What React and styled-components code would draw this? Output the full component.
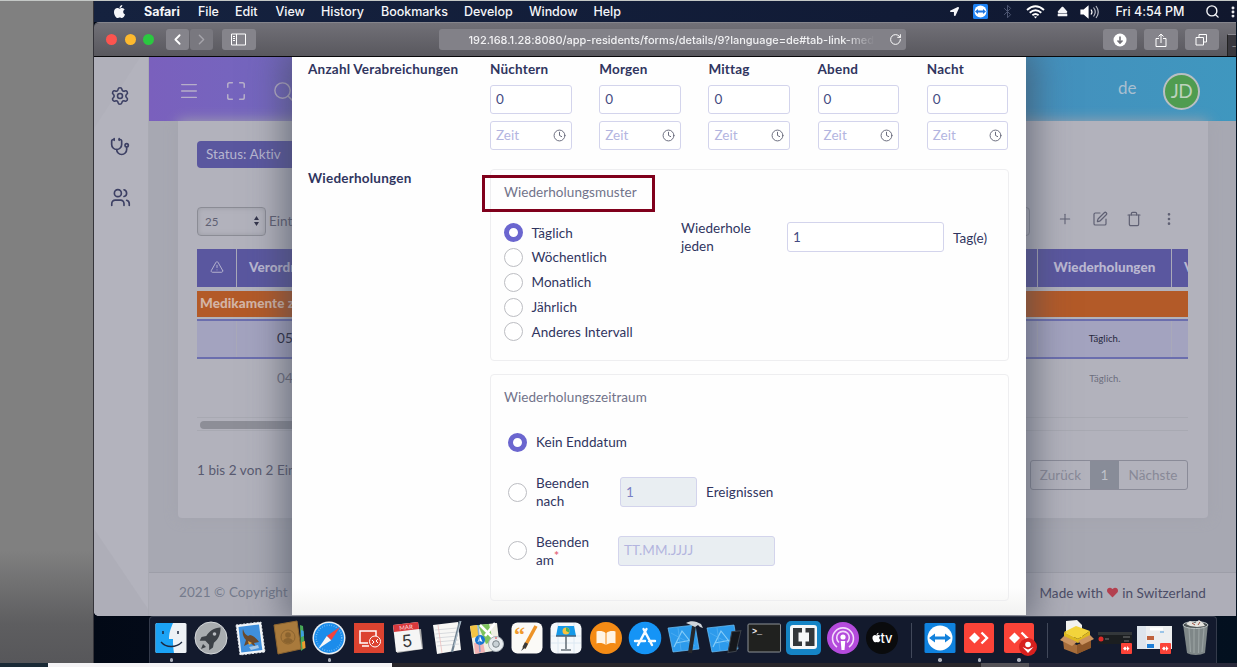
import React from "react";
import styled, { createGlobalStyle, css } from "styled-components";
import {
  Settings, Stethoscope, Users, Menu, Maximize, Search, Plus, SquarePen, Trash,
  EllipsisVertical, TriangleAlert, Clock4, ChevronLeft, ChevronRight, RotateCw, Share,
  Bluetooth,
} from "lucide-react";
import { FaApple, FaLocationArrow, FaHeart, FaEject } from "react-icons/fa";

const Global = createGlobalStyle`
  * { box-sizing: border-box; }
  html, body { margin: 0; height: 100%; overflow: hidden; background: #808080; }
  body { font-family: Lato, "Open Sans", sans-serif; font-size: 13.5px; letter-spacing: .06px; color: #30345f; }
  svg { display: block; flex: none; }
`;

/* ---------- desktop ---------- */
const Screen = styled.div`
  width: 1237px; height: 667px; display: flex; flex-direction: column;
  border-top: 1px solid #c4c8c6; overflow: hidden;
`;
const Stage = styled.div`height: 662px; display: flex;`;
const Gutter = styled.div`
  width: 94px; flex: none; border-right: 1px solid #35343a;
  background: linear-gradient(#808080 0 83%, #5e5e60 94%, #57575a);
`;
const Desktop = styled.div`
  flex: 1; min-width: 0; display: flex; flex-direction: column;
  background: linear-gradient(90deg, #020916, #0b1226 40%, #03101f);
`;
const Bottom = styled.div`
  height: 4px; display: flex; background: #29262a;
`;
const Strip = styled.div`width: ${(p) => p.$w}px; background: ${(p) => p.$c}; flex: none;`;

/* ---------- menu bar ---------- */
const MenuBar = styled.div`
  height: 21px; flex: none; display: flex; align-items: center; padding-left: 18px;
  background: linear-gradient(90deg, #15223f, #111b36 70%, #10172d); color: #f5f6f9;
  font: 500 12.5px/20px Inter, sans-serif; letter-spacing: -0.03px; white-space: nowrap;
`;
const MenuItem = styled.span`
  width: ${(p) => p.$w}px; flex: none; font-weight: ${(p) => (p.$bold ? 700 : 500)};
`;
const Tray = styled.div`display: flex; align-items: center; margin-left: auto;`;
const TrayItem = styled.span`
  width: ${(p) => p.$w}px; flex: none; display: flex; justify-content: ${(p) => p.$j || "center"};
`;

/* ---------- browser ---------- */
const Browser = styled.div`
  height: 594px; width: 1142px; flex: none; border-radius: 5px 0 0 5px; overflow: hidden;
  border-top: 1px solid #85858c; display: flex; flex-direction: column;
`;
const Toolbar = styled.div`
  height: 34px; flex: none; display: flex; align-items: center; padding-left: 12px; position: relative;
  background: linear-gradient(#717077, #59585e); border-bottom: 1px solid #08080a; color: #fff;
`;
const Light = styled.i`
  width: 11px; height: 11px; border-radius: 50%; margin-right: 7.5px; background: ${(p) => p.$c};
`;
const TbButton = styled.div`
  width: ${(p) => p.$w}px; height: 21px; border-radius: 3px; margin-left: ${(p) => p.$ml || 0}px;
  display: flex; align-items: center; justify-content: center; flex: none;
  background: ${(p) => (p.$dim ? "#79787f" : "#85848b")}; color: ${(p) => (p.$dim ? "#a5a4aa" : "#fff")};
`;
const Address = styled.div`
  width: 467px; height: 21px; margin-left: 183px; border-radius: 3px; background: #828188;
  display: flex; align-items: center; padding: 0 4px 0 30px; flex: none;
  font: 500 11px/20px Inter, sans-serif; letter-spacing: -0.01px;
`;
const Url = styled.span`
  width: 406px; overflow: hidden; white-space: nowrap; color: #f1f1f3; margin-right: auto;
  mask-image: linear-gradient(90deg, #000 92%, transparent);
`;
const TabEdge = styled.div`
  width: 9px; height: 22px; align-self: flex-end; margin-left: 8px; background: #39383e;
  border-left: 1px solid #222; border-top: 1px solid #8a8990; display: flex; align-items: center;
  font-size: 9px; padding-left: 4px; color: #aaa;
`;

/* ---------- page behind the dialog ---------- */
const Page = styled.div`flex: 1; display: flex; position: relative; overflow: hidden; background: #a7a8b2;`;
const Sidebar = styled.div`
  width: 55px; flex: none; display: flex; flex-direction: column; align-items: center;
  padding: 29px 2px 0 0; gap: 30.5px; color: #3d4064;
  background: linear-gradient(123deg, #b0b0ba 0 11%, transparent 11.3%),
    linear-gradient(56deg, #aeaeb8 0 13.5%, transparent 13.8%), #b3b3bd;
  border-right: 1px solid #a9aab3;
`;
const Main = styled.div`flex: 1; display: flex; flex-direction: column; min-width: 0;`;
const Header = styled.div`
  height: 64px; flex: none; display: flex; align-items: center; padding: 4px 36px 0 29px; color: #b6aec9; gap: 25px;
  background: linear-gradient(90deg, #7a60bd, #6c6ec0 25%, #4b88bb 58%, #3f97bf);
`;
const Lang = styled.span`margin-left: auto; width: 20px; font-size: 17px; line-height: 20px; color: #a9bfd0; padding-bottom: 6px;`;
const Avatar = styled.span`
  width: 37px; height: 37px; border-radius: 50%; border: 2px solid #b9bfc3; background: #4f9c50;
  color: #bdd2bd; font-size: 19px; line-height: 31px; text-align: center; letter-spacing: -0.5px;
`;
const Card = styled.div`
  margin: 0 28px 0 29px; height: 397px; flex: none; background: #b2b2bc; border-radius: 0 0 4px 4px;
  padding: 20px 20px 0 19px; display: flex; flex-direction: column; box-shadow: 0 0 14px #a3a4ae;
`;
const Badge = styled.div`
  width: 120px; height: 27px; border-radius: 4px; background: #5a579f; color: #b7b6cf;
  line-height: 27px; padding-left: 9px; flex: none;
`;
const ListTools = styled.div`
  display: flex; height: 30px; margin-top: 38px; align-items: center; color: #5f6073; flex: none;
`;
const SizeSelect = styled.span`
  width: 69px; height: 29px; border: 1px solid #8b8c95; border-radius: 4px; margin-right: 3px;
  box-shadow: inset 0 0 5px #9b9ca5; display: flex; align-items: center; justify-content: space-between;
  padding: 0 5px 0 7px; font-size: 11.5px;
`;
const SearchEnd = styled.span`
  width: 30px; height: 29px; border: 1px solid #8b8c98; border-radius: 4px; margin-left: auto;
`;
const ToolIcons = styled.span`
  display: flex; align-items: center; width: 158px; padding-left: 27px; gap: 18.5px; padding-bottom: 5px;
`;
const Table = styled.div`margin-top: 13px; width: 991px; overflow: hidden; flex: none;`;
const Row = styled.div`
  display: grid; grid-template-columns: 40px 801px 134px 16px; height: ${(p) => p.$h}px; align-items: stretch;
  ${(p) => p.$kind === "head" && css`background: #5a579f; color: #bab8d1; font-weight: 900;`}
  ${(p) => p.$kind === "selected" && css`
    background: #a3a3bf; color: #26273b; border: solid #6b6eae; border-width: 2px 0;`}
  ${(p) => p.$kind === "plain" && css`color: #6c6d7c;`}
`;
const Cell = styled.div`
  display: flex; align-items: center; justify-content: ${(p) => p.$j || "flex-start"};
  padding-left: ${(p) => p.$pl || 0}px; font-size: ${(p) => p.$fs || 13.5}px; overflow: hidden; padding-bottom: 2px;
  border-right: ${(p) => (p.$line ? "1px solid #a9a9b9" : "0")};
`;
const Group = styled.div`
  height: 26px; margin: 4px 0 2px; background: #b35a28; color: #d3b5a6; font-weight: 900;
  line-height: 25px; padding-left: 3px;
`;
const ScrollTrack = styled.div`
  margin-top: 18px; height: 14px; border: solid #a8a9b2; border-width: 1px 0; padding: 3px; flex: none;
`;
const ScrollThumb = styled.div`width: 700px; height: 8px; border-radius: 4px; background: #8d8e97;`;
const Pager = styled.div`
  display: flex; margin-top: 29px; align-items: flex-start; color: #595a70; line-height: 20px; flex: none;
`;
const PageGroup = styled.div`
  display: flex; margin-left: auto; height: 30px; border: 1px solid #8a8b98; border-radius: 3px;
  color: #888997; line-height: 28px;
`;
const PageBtn = styled.span`
  width: ${(p) => p.$w}px; text-align: center; ${(p) => p.$on && css`background: #888c98; color: #bfc1ca;`}
`;
const Footer = styled.div`
  height: 44px; margin-top: auto; flex: none; display: flex; justify-content: space-between; align-items: center;
  border-top: 1px solid #9d9ea8; background: #aeaeb8; padding: 0 30px 6px; color: #757b8c;
`;
const Made = styled.span`display: flex; gap: 4px; align-items: center; color: #4b4c66; padding-top: 2px;`;

/* ---------- dialog ---------- */
const Dialog = styled.div`
  position: absolute; left: 198px; top: 0; width: 734px; height: 558px;
  background: linear-gradient(#fefefe 0 95%, #f2f2f1); padding: 3px 16px 0;
  box-shadow: 0 0 34px 8px rgba(66, 72, 88, 0.62); color: #30355f;
`;
const FormRow = styled.div`display: flex; margin-bottom: ${(p) => p.$mb || 0}px;`;
const FormLabel = styled.div`
  width: 182px; flex: none; font-weight: 700; line-height: 18px; letter-spacing: 0.22px;
`;
const Times = styled.div`display: grid; grid-template-columns: repeat(5, 82px); column-gap: 27.2px;`;
const Dose = styled.div`display: flex; flex-direction: column; gap: 7px;`;
const DoseName = styled.div`font-weight: 700; line-height: 18px; letter-spacing: 0.2px;`;
const Field = styled.div`
  height: ${(p) => p.$h || 29}px; width: ${(p) => p.$w || 81.5}px; flex: none; display: flex; align-items: center;
  justify-content: space-between; padding: 0 5px 1px 5px; border: 1px solid #d3d4ec; border-radius: 3px;
  margin-top: ${(p) => p.$mt || 0}px;
  background: ${(p) => (p.$off ? "#e9eef2" : "#fff")};
  color: ${(p) => (p.$hint ? "#b3b5df" : p.$off ? "#7a7fc4" : "#454b82")};
`;
const Panels = styled.div`flex: 1; display: flex; flex-direction: column; gap: 13px; margin-right: 1px;`;
const Panel = styled.div`
  height: ${(p) => p.$h}px; width: 519px; border: 1px solid #eeeef0; border-radius: 4px; padding: 12px 13px;
`;
const PanelTitle = styled.div`line-height: 20px; color: #71738a;`;
const Pattern = styled.div`display: flex; margin-top: 18.500px;`;
const Options = styled.div`display: flex; flex-direction: column; width: 177px; gap: 0.85px;`;
const Option = styled.div`
  display: flex; align-items: center; gap: 8.5px; line-height: 18px; height: 24px;
`;
const Dot = styled.i`
  width: 19px; height: 19px; border-radius: 50%; flex: none; background: #fff;
  border: ${(p) => (p.$on ? "5.5px solid #6b66cf" : "1px solid #bcbdc2")};
`;
const Every = styled.div`width: 106px; line-height: 18px; margin-top: -2px;`;
const Unit = styled.div`line-height: 30px; margin-left: 9px; margin-top: ${(p) => p.$mt || 0}px;`;
const EndRow = styled.div`
  display: flex; align-items: center; padding-left: 4px; margin-top: ${(p) => p.$mt}px; height: 36px;
`;
const EndName = styled.div`width: ${(p) => p.$w || 112}px; display: flex; align-items: center; gap: 9px; line-height: 18px;`;
const Star = styled.sup`color: #e46c80; font-size: 12px; font-weight: 700; line-height: 0; vertical-align: 5px;`;
const Callout = styled.div`
  position: absolute; left: 482px; top: 175px; width: 173px; height: 37px; border: 3px solid #80001c;
`;

/* ---------- dock ---------- */
const Dock = styled.div`
  height: 47px; width: 1068px; margin-left: 54.5px; padding-left: 2px; display: flex; flex: none;
  background: #131a2d; border: solid #343b4b; border-width: 1px 1px 0; border-radius: 4px 4px 0 0;
`;
const Slot = styled.div`
  width: 39.5px; flex: none; display: flex; flex-direction: column; align-items: center; padding-top: 2px; gap: 1px;
`;
const Running = styled.i`width: 3.5px; height: 3.5px; border-radius: 50%; background: #aeb2bd;`;
const Divider = styled.i`width: 1px; height: 35px; margin: 6px 8.5px 0; background: #41485a; flex: none;`;

const Svg = ({ children }) => <svg width="38" height="38" viewBox="0 0 38 38">{children}</svg>;
const AnyDesk = () => (
  <g>
    <rect x="4" y="4" width="30" height="30" rx="2.5" fill="#fb4338" />
    <path d="M9 19l5.500-5.500 5.500 5.500-5.500 5.500z" fill="#fff" />
    <path d="M18 14l5 5-5 5M23 14l5 5-5 5" fill="none" stroke="#fb4338" strokeWidth="3" />
    <path d="M21.500 13.500l5.500 5.500-5.500 5.500" fill="none" stroke="#fff" strokeWidth="2.400" />
  </g>
);
const Xcode = () => (
  <g>
    <path d="M2 9l27-3 4 24-26 3z" fill="#2d9bec" stroke="#70c2f6" strokeWidth=".7" />
    <path d="M8 28L16 12l11 14M10 24l16-3" stroke="#85cdf9" strokeWidth="1.200" fill="none" />
    <path d="M5 14l24 13M12 9l3 22" stroke="#5cb6f4" strokeWidth=".6" fill="none" />
  </g>
);

const icons = {
  finder: (
    <Svg>
      <rect x="3.500" y="4" width="31" height="30" rx="1.500" fill="#eef2f6" />
      <path d="M5 4h16c-3 7-4 11-4 16h4c-.2 5 .3 9 1 14H5a1.500 1.500 0 0 1-1.500-1.500v-27A1.500 1.500 0 0 1 5 4z" fill="#1ba3f6" />
      <path d="M11 12v3M26 12v3" stroke="#1c2840" strokeWidth="1.500" />
      <path d="M9 23c5 6 15 6 21 0" stroke="#1c2840" strokeWidth="1.300" fill="none" />
    </Svg>
  ),
  launchpad: (
    <Svg>
      <circle cx="19" cy="19" r="16" fill="#a9adb0" stroke="#d5d8da" />
      <path d="M29 9c-7 0-12 4-15 9l-5 1-2 4 6 0 4 4v6l4-3 1-5c5-4 7-9 7-16z" fill="#3c4147" transform="translate(1 0) scale(.95)" />
      <circle cx="22.500" cy="15" r="1.800" fill="#b8bcc0" />
      <path d="M11 25l-2 5 5-2z" fill="#3c4147" />
    </Svg>
  ),
  mail: (
    <Svg>
      <path d="M5 6l25-3 4 30-25 3z" fill="#f4f6f8" stroke="#dfe4ea" strokeDasharray="2 1.500" />
      <path d="M7.500 8l20.500-2.500 3.300 25.500-21 2.500z" fill="#3f8fdc" />
      <path d="M12 10c1 4 3 6 5 7l2-1c4 1 7 4 9 7l-5 1 2 4-6-4-6 3 2-6c-3-3-4-7-3-11z" fill="#6b4a2c" />
      <path d="M18 28l9-2 1 3-8 2z" fill="#a9c9e6" /><path d="M17 22l4 2-3 2z" fill="#e8a63b" />
    </Svg>
  ),
  contacts: (
    <Svg>
      <path d="M29 6l3 1 2 22-4 3z" fill="#48a958" />
      <path d="M30 11l2.500 1 .5 5-3 1z" fill="#3e9ee0" /><path d="M31 23l3-1 .5 7-3 1z" fill="#ee9b2f" />
      <path d="M3 6l23-4 4 28-23 5z" fill="#a97a3c" stroke="#8d6530" />
      <circle cx="17" cy="18" r="7" fill="none" stroke="#8a632f" />
      <circle cx="17" cy="16" r="2.800" fill="#8a632f" /><path d="M12 22c2-4 8-4 10 0-3 3-7 3-10 0z" fill="#8a632f" />
    </Svg>
  ),
  safari: (
    <Svg>
      <circle cx="19" cy="19" r="16.500" fill="#e9eef2" /><circle cx="19" cy="19" r="15" fill="#1b8ceb" />
      <circle cx="19" cy="19" r="12.800" fill="none" stroke="#8ccbf8" strokeWidth="1.500" strokeDasharray=".6 1.800" />
      <path d="M30 8L16.800 17l4.400 4.200z" fill="#f2433e" /><path d="M8 30l8.800-13 4.400 4.200z" fill="#f4f6f8" />
    </Svg>
  ),
  remote: (
    <Svg>
      <rect x="4" y="4" width="30" height="30" fill="#dc4330" />
      <path d="M18 24h-8V12h16v5M12 27h7" stroke="#fff" strokeWidth="1.500" fill="none" />
      <circle cx="25" cy="22.500" r="5.500" fill="#dc4330" stroke="#fff" />
      <path d="M22 21l2 2-2 2M28 20l-2 2 2 2" stroke="#fff" fill="none" />
    </Svg>
  ),
  calendar: (
    <Svg>
      <path d="M6 13l26-3 2 20-26 4z" fill="#a9a9a9" /><path d="M4 6l25-3 4 27-26 3z" fill="#f5f5f5" />
      <path d="M4 6l25-3 1 7-25 3z" fill="#d8383c" />
      <text x="17" y="10.500" fontSize="6" fill="#fbdcdc" textAnchor="middle" transform="rotate(-6 17 8)">MAR</text>
      <text x="18" y="28" fontSize="17" fontFamily="Inter, sans-serif" fill="#38383a" textAnchor="middle" transform="rotate(-6 18 22)">5</text>
    </Svg>
  ),
  textedit: (
    <Svg>
      <path d="M4 6l25-3 3 28-24 4z" fill="#f7f7f5" />
      <path d="M6 11l22-2M6.500 15l22-2M7 19l22-2M7.500 23l22-2M8 27l22-2" stroke="#cfd3d8" strokeWidth=".8" />
      <path d="M9 6l4 28" stroke="#edb7b7" strokeWidth=".7" />
      <path d="M31 2L23 33" stroke="#6f8190" strokeWidth="2.200" /><path d="M32 2L25 27" stroke="#c4d4df" strokeWidth=".8" />
    </Svg>
  ),
  maps: (
    <Svg>
      <path d="M2 7l27-3 3 27-26 4z" fill="#efefe4" />
      <path d="M10 6l11-1 4 17-7 3z" fill="#7cc45b" /><path d="M2 7l7-1 2 11-7 2z" fill="#f3c545" />
      <path d="M12 6l16 16M27 4l-10 13" stroke="#fff" strokeWidth="2.500" /><path d="M6 24l9-1 2 10-10 2z" fill="#f3b3b4" />
      <circle cx="12" cy="21" r="5" fill="#1775d1" /><path d="M12 17l2.500 6-2.500-1-2.500 1z" fill="#fff" />
      <path d="M10 6l2 27" stroke="#4b93dc" strokeWidth="1.500" opacity=".6" />
      <circle cx="28" cy="25" r="7.500" fill="#e9edf0" stroke="#a7b0b6" />
      <circle cx="28" cy="25" r="3.300" fill="#c9d1d6" stroke="#7c858b" /><path d="M28 18v2" stroke="#df4040" />
    </Svg>
  ),
  pages: (
    <Svg>
      <rect x="3.500" y="3.500" width="31" height="31" rx="6" fill="#fbfaf7" />
      <text x="6" y="23" fontSize="22" fill="#f09a2c" fontFamily="Liberation Serif, serif" fontWeight="700">“</text>
      <path d="M28 7L16 29" stroke="#ec9328" strokeWidth="3.500" /><path d="M16.500 26L13 32l5-4z" fill="#343434" />
      <path d="M18.500 24L16 29" stroke="#3a3a3c" strokeWidth="3.500" />
    </Svg>
  ),
  keynote: (
    <Svg>
      <rect x="3.500" y="3.500" width="31" height="31" rx="6" fill="#f5f8fb" />
      <path d="M4 17h30M4 24h30M11 4v30M27 4v30" stroke="#dce8f2" />
      <path d="M11 7h16l2 10H9z" fill="#1599e8" /><circle cx="19" cy="12" r="3.500" fill="#fbc13c" />
      <path d="M19 12V8.500a3.500 3.500 0 0 1 3 5z" fill="#48b35a" />
      <path d="M9 17h20" stroke="#49627a" strokeWidth="1.500" /><path d="M19 17v13M14 31h10" stroke="#68727b" strokeWidth="1.600" />
    </Svg>
  ),
  books: (
    <Svg>
      <circle cx="19" cy="19" r="16" fill="#f48b15" />
      <path d="M18.500 14c-2-2-6-2.500-9-1.500v12c3-1 7-.5 9 1.500zM19.500 14c2-2 6-2.500 9-1.500v12c-3-1-7-.5-9 1.500z" fill="#fff4e4" />
    </Svg>
  ),
  appstore: (
    <Svg>
      <circle cx="19" cy="19" r="16.300" fill="#1594f6" />
      <path d="M20.500 10L12 26M17.500 10L26 26M9 22h10M23 22h6" stroke="#f5fbff" strokeWidth="2.400" strokeLinecap="round" />
    </Svg>
  ),
  xcode: (
    <Svg>
      <Xcode /><path d="M28 7l-4 27" stroke="#26282c" strokeWidth="4" />
      <path d="M20 4c5-3 10-2 15 1l2 4-3-1-2-2-3 2-4-2z" fill="#cfd4d9" />
    </Svg>
  ),
  simulator: <Svg><Xcode /><path d="M26 13l9-2-3 21-8 2z" fill="#15171c" stroke="#3b4149" transform="rotate(5 28 22)" /></Svg>,
  terminal: (
    <Svg>
      <rect x="3" y="5" width="32.500" height="28" rx="1" fill="#20211f" stroke="#8d9296" />
      <text x="7" y="15" fontSize="8.500" fontWeight="700" letterSpacing="0" fontFamily="Liberation Mono, monospace" fill="#f0f0f0">&gt;_</text>
    </Svg>
  ),
  brackets: (
    <Svg>
      <rect x="2" y="2" width="35" height="34" rx="5" fill="#1584c5" />
      <rect x="6" y="6" width="27" height="24" rx="3" fill="#f5f7f8" />
      <path d="M18 9H9v18h9v-4.500h-3.500v-9H18zM21.500 9h9v18h-9v-4.500H25v-9h-3.500z" fill="#33373a" />
    </Svg>
  ),
  podcasts: (
    <Svg>
      <circle cx="19" cy="19" r="16" fill="#b44bdc" />
      <g fill="none" stroke="#f3dcfb" strokeWidth="1.600">
        <path d="M13 28a10.500 10.500 0 1 1 12 0" /><path d="M15 23.500a6.300 6.300 0 1 1 8 0" />
      </g>
      <circle cx="19" cy="18" r="2.600" fill="#fff" /><path d="M16.700 22h4.600l-.8 9h-3z" fill="#fff" />
    </Svg>
  ),
  tv: (
    <Svg>
      <circle cx="19" cy="19" r="16" fill="#0a0b0d" />
      <FaApple x="8" y="13" size={11} color="#fff" />
      <text x="17.500" y="24" fontSize="13" letterSpacing="-.3" fontFamily="Inter, sans-serif" fontWeight="500" fill="#fff">tv</text>
    </Svg>
  ),
  teamviewer: (
    <Svg>
      <rect x="3.500" y="4" width="31" height="30" rx="1.500" fill="#0f82df" /><circle cx="19" cy="19" r="12.500" fill="#fff" />
      <path d="M8 19l6-4.500v3h10v-3l6 4.500-6 4.500v-3H14v3z" fill="#1382dc" />
    </Svg>
  ),
  anydesk: <Svg><AnyDesk /></Svg>,
  anydeskIn: (
    <Svg><AnyDesk /><circle cx="28" cy="28" r="9" fill="#d7201e" /><circle cx="28" cy="25.500" r="2.800" fill="#fff" />
      <path d="M22.500 28l5.500 6 5.500-6-5.500 2.500z" fill="#fff" /></Svg>
  ),
  box: (
    <Svg>
      <path d="M9 2l11-1 5 5v12H9z" fill="#f2f2ef" />
      <path d="M6 21l14 5v9L7 30zM34 20l-14 6v9l13-6z" fill="#a76d3b" /><path d="M20 26l14-6v9l-14 6z" fill="#8e5729" />
      <path d="M7 13l12-6 14 5-12 8z" fill="#f3d43b" /><path d="M7 13l14 7v4L7 18zM33 12l-12 8v4l12-7z" fill="#dfb91f" />
      <path d="M7 17l-4 4 12 6 5-4zM33 16l4 4-12 6-4-4z" fill="#cc9460" />
    </Svg>
  ),
  winDark: (
    <Svg>
      <rect x="1" y="13" width="34" height="12" fill="#1b1e20" /><rect x="1" y="13" width="34" height="3" fill="#33373a" />
      <circle cx="4" cy="20" r="2.500" fill="#df2a28" /><path d="M8 20h4M26 18h7M27 22h5" stroke="#777" />
      <rect x="24" y="24" width="11" height="11" rx="1" fill="#fb4338" />
      <path d="M26 29.500l2-2 2 2-2 2zM30 27l2.500 2.500L30 32z" fill="#fff" />
    </Svg>
  ),
  winLight: (
    <Svg>
      <rect x="1" y="7" width="35" height="23" fill="#eceef0" /><rect x="1" y="7" width="9" height="23" fill="#dde4ec" />
      <path d="M14 10h13" stroke="#fff" strokeWidth="3" /><rect x="11" y="17" width="7" height="4" fill="#c0623d" />
      <rect x="11" y="25" width="7" height="4" fill="#1f80d8" /><path d="M24 13h4" stroke="#4a9be0" />
      <rect x="24" y="24" width="11" height="11" rx="1" fill="#fb4338" />
      <path d="M26 29.500l2-2 2 2-2 2zM30 27l2.500 2.500L30 32z" fill="#fff" />
    </Svg>
  ),
  trash: (
    <Svg>
      <path d="M7 5h25l-3 29c-5 2.500-14 2.500-18 0z" fill="#7f8788" />
      <path d="M13 9l1.500 24M18 9v25M23 9l-.5 25M28 9l-2 24" stroke="#a5adad" strokeWidth="1.200" opacity=".7" />
      <ellipse cx="19.500" cy="6" rx="12.500" ry="3.500" fill="#4e5557" stroke="#bdc4c5" />
      <path d="M10 5l4-3 5 2 4-3 4 3 2 3-8 1-7-1z" fill="#e6e4df" /><path d="M16 4l3 2M24 3l-2 3" stroke="#a04f3f" />
    </Svg>
  ),
};

const dock = [
  [["finder", 1], ["launchpad"], ["mail"], ["contacts"], ["safari", 1], ["remote"], ["calendar"], ["textedit"], ["maps"],
    ["pages"], ["keynote"], ["books"], ["appstore"], ["xcode"], ["simulator"], ["terminal"], ["brackets"], ["podcasts"], ["tv"]],
  [["teamviewer", 1], ["anydesk", 1], ["anydeskIn", 1]],
  [["box"], ["winDark"], ["winLight"], ["trash"]],
];

const menus = [["Safari", 54, true], ["File", 37], ["Edit", 40.5], ["View", 45.5], ["History", 60], ["Bookmarks", 83], ["Develop", 65], ["Window", 64.5], ["Help", 40]];

const Volume = () => (
  <svg width="20" height="14" viewBox="0 0 20 14" fill="none" stroke="#fff" strokeWidth="1.200">
    <path d="M1 5h3l4-3.500v11L4 9H1z" fill="#fff" /><path d="M11 4.500q2 2.500 0 5" />
    <path d="M13.500 2.500q3.500 4.500 0 9M16 1q4.500 6 0 12" stroke="#b8bbc6" />
  </svg>
);
const WifiFan = () => (
  <svg width="19" height="14" viewBox="0 0 19 14" fill="none" stroke="#fff" strokeWidth="1.900">
    <path d="M1 5q8.500-7.500 17 0M3.700 7.800q5.800-5 11.600 0M6.400 10.300q3.100-2.600 6.200 0" /><path d="M7.800 11.500h3.400L9.500 13.500z" fill="#fff" stroke="none" />
  </svg>
);

export default function App() {
  return (
    <>
      <Global />
      <Screen>
        <Stage>
          <Gutter />
          <Desktop>
            <MenuBar>
              <TrayItem $w={32} $j="flex-start"><FaApple size={15} /></TrayItem>
              {menus.map(([name, w, bold]) => <MenuItem key={name} $w={w} $bold={bold}>{name}</MenuItem>)}
              <Tray>
                <TrayItem $w={26}><FaLocationArrow size={9} /></TrayItem>
                <TrayItem $w={27}>
                  <svg width="15" height="15" viewBox="0 0 15 15">
                    <rect width="15" height="15" rx="1.500" fill="#1d82f5" /><circle cx="7.500" cy="7.500" r="6" fill="#fff" />
                    <path d="M2 7.500l3-2.500v1.500h5V5l3 2.500-3 2.500V8.500H5V10z" fill="#1d74df" />
                  </svg>
                </TrayItem>
                <TrayItem $w={27}><Bluetooth size={15} strokeWidth={1.6} color="#4c5571" /></TrayItem>
                <TrayItem $w={28}><WifiFan /></TrayItem>
                <TrayItem $w={27}><FaEject size={11} /></TrayItem>
                <TrayItem $w={27}><Volume /></TrayItem>
                <TrayItem $w={94}>Fri 4:54 PM</TrayItem>
                <TrayItem $w={31}><Search size={15} strokeWidth={2.2} /></TrayItem>
                <TrayItem $w={9}><EllipsisVertical size={14} strokeWidth={3} /></TrayItem>
              </Tray>
            </MenuBar>
            <Browser>
              <Toolbar>
                <Light $c="#fc544f" /><Light $c="#fdb92e" /><Light $c="#2bc840" />
                <TbButton $w={23} $ml={4}><ChevronLeft size={17} strokeWidth={2.5} /></TbButton>
                <TbButton $w={23} $ml={1} $dim><ChevronRight size={17} strokeWidth={2} /></TbButton>
                <TbButton $w={34} $ml={9}>
                  <svg width="15" height="13" viewBox="0 0 15 13" fill="none" stroke="#fff">
                    <path d="M.5 1h14v11H.5zM5.500 1v11M2 3.500h2M2 5.500h2M2 7.500h2" />
                  </svg>
                </TbButton>
                <Address>
                  <Url>192.168.1.28:8080/app-residents/forms/details/9?language=de#tab-link-medi</Url>
                  <RotateCw size={13} strokeWidth={1.8} />
                </Address>
                <TbButton $w={34} $ml={197}>
                  <svg width="14" height="14" viewBox="0 0 14 14">
                    <circle cx="7" cy="7" r="6.500" fill="#fff" /><path d="M7 3.500v6M4.500 7.500L7 10l2.500-2.500" stroke="#717077" strokeWidth="1.600" fill="none" />
                  </svg>
                </TbButton>
                <TbButton $w={34} $ml={7}>
                  <svg width="12" height="14" viewBox="0 0 12 14" fill="none" stroke="#fff"><path d="M4 5.500H1v8h10v-8H8M6 10V1M3.500 3.500L6 1l2.500 2.500" /></svg>
                </TbButton>
                <TbButton $w={34} $ml={7}>
                  <svg width="13" height="13" viewBox="0 0 13 13" fill="none" stroke="#fff"><path d="M1 4.500h7.500V12H1zM4 4V1.500h7.500V9H9" /></svg>
                </TbButton>
                <TabEdge>–</TabEdge>
              </Toolbar>
              <Page>
                <Sidebar>
                  <Settings size={20} strokeWidth={1.9} />
                  <Stethoscope size={20} strokeWidth={2} />
                  <Users size={21} strokeWidth={1.9} />
                </Sidebar>
                <Main>
                  <Header>
                    <Menu size={22} strokeWidth={1.5} />
                    <Maximize size={22} strokeWidth={1.7} />
                    <Search size={23} strokeWidth={1.5} />
                    <Lang>de</Lang>
                    <Avatar>JD</Avatar>
                  </Header>
                  <Card>
                    <Badge>Status: Aktiv</Badge>
                    <ListTools>
                      <SizeSelect>
                        25
                        <svg width="7" height="10" viewBox="0 0 7 10" fill="#33344a"><path d="M3.500 0L6 4H1zM3.500 10L6 6H1z" /></svg>
                      </SizeSelect>
                      Einträge
                      <SearchEnd />
                      <ToolIcons>
                        <Plus size={16} strokeWidth={1.6} />
                        <SquarePen size={16} strokeWidth={1.8} />
                        <Trash size={16} strokeWidth={1.8} />
                        <EllipsisVertical size={16} />
                      </ToolIcons>
                    </ListTools>
                    <Table>
                      <Row $h={38} $kind="head">
                        <Cell $line $j="center"><TriangleAlert size={14} strokeWidth={1.6} /></Cell>
                        <Cell $line $pl={12}>Verordnung</Cell>
                        <Cell $line $j="center">Wiederholungen</Cell>
                        <Cell $pl={12}>V</Cell>
                      </Row>
                      <Group>Medikamente zur</Group>
                      <Row $h={40} $kind="selected">
                        <Cell $line /><Cell $line $pl={40}>05</Cell><Cell $line $j="center" $fs={9.5}>Täglich.</Cell><Cell />
                      </Row>
                      <Row $h={40} $kind="plain">
                        <Cell /><Cell $pl={40}>04</Cell><Cell $j="center" $fs={9.5}>Täglich.</Cell><Cell />
                      </Row>
                    </Table>
                    <ScrollTrack><ScrollThumb /></ScrollTrack>
                    <Pager>
                      1 bis 2 von 2 Ein
                      <PageGroup><PageBtn $w={59}>Zurück</PageBtn><PageBtn $w={29} $on>1</PageBtn><PageBtn $w={68}>Nächste</PageBtn></PageGroup>
                    </Pager>
                  </Card>
                  <Footer>
                    <span>2021 © Copyright E</span>
                    <Made>Made with <FaHeart size={11} color="#b3404f" /> in Switzerland</Made>
                  </Footer>
                </Main>
                <Dialog>
                  <FormRow $mb={19}>
                    <FormLabel>Anzahl Verabreichungen</FormLabel>
                    <Times>
                      {["Nüchtern", "Morgen", "Mittag", "Abend", "Nacht"].map((name) => (
                        <Dose key={name}>
                          <DoseName>{name}</DoseName>
                          <Field>0</Field>
                          <Field $hint>Zeit<Clock4 size={13} strokeWidth={1.8} color="#696b7c" /></Field>
                        </Dose>
                      ))}
                    </Times>
                  </FormRow>
                  <FormRow>
                    <FormLabel>Wiederholungen</FormLabel>
                    <Panels>
                      <Panel $h={192}>
                        <PanelTitle>Wiederholungsmuster</PanelTitle>
                        <Pattern>
                          <Options>
                            {["Täglich", "Wöchentlich", "Monatlich", "Jährlich", "Anderes Intervall"].map((name, i) => (
                              <Option key={name}><Dot $on={i === 0} />{name}</Option>
                            ))}
                          </Options>
                          <Every>Wiederhole<br />jeden</Every>
                          <Field $w={157} $h={30} $mt={1.5}>1</Field>
                          <Unit $mt={2}>Tag(e)</Unit>
                        </Pattern>
                      </Panel>
                      <Panel $h={227}>
                        <PanelTitle>Wiederholungszeitraum</PanelTitle>
                        <EndRow $mt={17}><EndName $w={200}><Dot $on />Kein Enddatum</EndName></EndRow>
                        <EndRow $mt={14}>
                          <EndName><Dot /><span>Beenden<br />nach</span></EndName>
                          <Field $w={77} $h={30} $off>1</Field><Unit>Ereignissen</Unit>
                        </EndRow>
                        <EndRow $mt={22.5}>
                          <EndName $w={110}><Dot /><span>Beenden<br />am<Star>*</Star></span></EndName>
                          <Field $w={157} $h={30} $off $hint>TT.MM.JJJJ</Field>
                        </EndRow>
                      </Panel>
                    </Panels>
                  </FormRow>
                </Dialog>
              </Page>
            </Browser>
            <Dock>
              {dock.map((group, g) => (
                <React.Fragment key={g}>
                  {g > 0 && <Divider />}
                  {group.map(([name, on]) => <Slot key={name}>{icons[name]}{on && <Running />}</Slot>)}
                </React.Fragment>
              ))}
            </Dock>
          </Desktop>
        </Stage>
        <Bottom>
          <Strip $w={48} $c="#1a2a35" /><Strip $w={344} $c="#f4f3f5" /><Strip $w={589} $c="#29262a" /><Strip $w={48} $c="#545257" /><Strip $w={208} $c="#29293a" />
        </Bottom>
      </Screen>
      <Callout />
    </>
  );
}
